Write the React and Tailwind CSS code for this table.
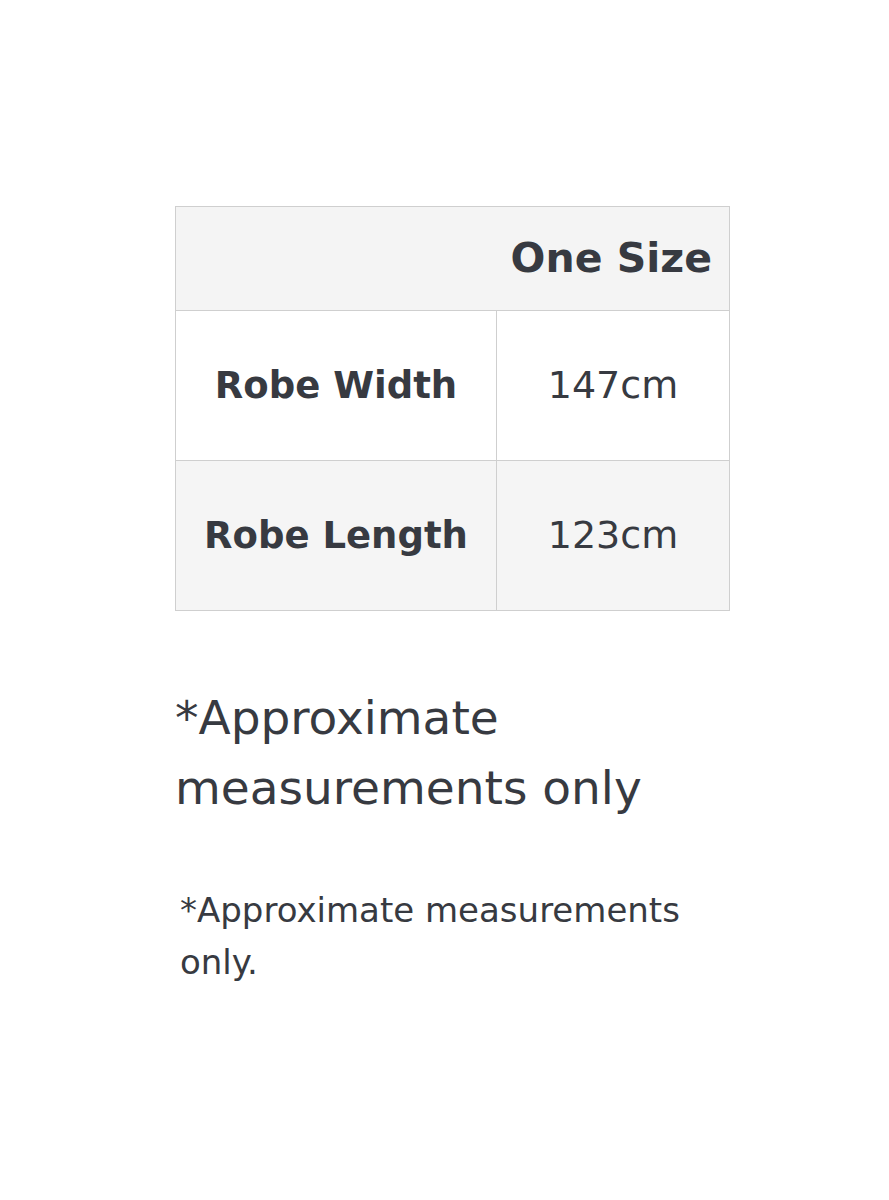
export default function App() {
  return (
    <div className="min-h-[1200px] bg-white pl-[175px] pt-[206px] text-[#373a41] [font-family:'DejaVu_Sans',Inter,sans-serif]">
      <table className="w-[555px] border-collapse border border-[#cfcfcf]">
        <thead>
          <tr className="h-[104px] bg-[#f4f4f4]">
            <th
              colSpan={2}
              className="pr-[17px] text-right text-[41px] font-bold"
            >
              One Size
            </th>
          </tr>
        </thead>
        <tbody>
          <tr className="h-[150px] bg-white">
            <td className="w-[321px] border border-[#cfcfcf] text-center text-[37px] font-bold">
              Robe Width
            </td>
            <td className="border border-[#cfcfcf] text-center text-[38px] font-normal">
              147cm
            </td>
          </tr>
          <tr className="h-[150px] bg-[#f5f5f5]">
            <td className="border border-[#cfcfcf] text-center text-[37px] font-bold">
              Robe Length
            </td>
            <td className="border border-[#cfcfcf] text-center text-[38px] font-normal">
              123cm
            </td>
          </tr>
        </tbody>
      </table>

      <p className="mt-[72px] text-[47px] leading-[70px]">
        *Approximate
        <br />
        measurements only
      </p>

      <p className="mt-[61px] pl-[5px] text-[34px] leading-[52px]">
        *Approximate measurements
        <br />
        only.
      </p>
    </div>
  );
}
